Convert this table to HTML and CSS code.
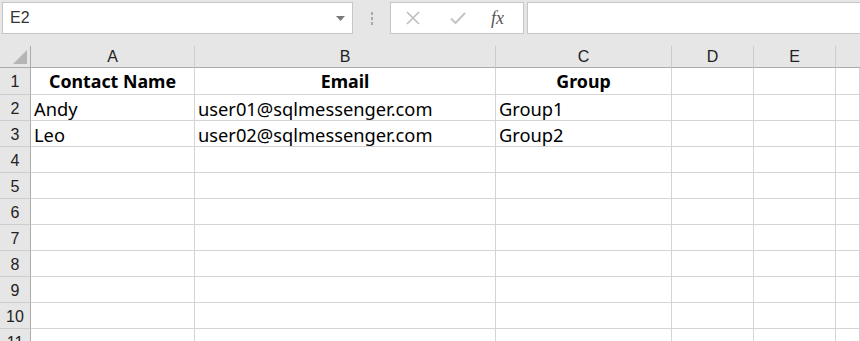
FILE: index.html
```html
<!DOCTYPE html>
<html lang="en">
<head>
    <meta charset="UTF-8">
    <meta name="viewport" content="width=device-width, initial-scale=1.0">
    <title>Contacts.xlsx</title>
    <link rel="stylesheet" href="styles.css">
</head>
<body>
    <div class="toolbar">
        <div class="namebox">
            <span>E2</span>
            <svg class="drop" width="9" height="5" viewBox="0 0 9 5"><path d="M0 0h9L4.5 5z" fill="#7a7a7a"/></svg>
        </div>
        <div class="grip">
            <i></i><i></i><i></i>
        </div>
        <div class="actions">
            <svg width="16" height="16" viewBox="0 0 16 16"><path d="M2 2l12 12M14 2L2 14" stroke="#bdbdbd" stroke-width="1.6" fill="none"/></svg>
            <svg width="18" height="16" viewBox="0 0 18 16"><path d="M2 8.5l4.5 4.5L16 3" stroke="#c4c4c4" stroke-width="2" fill="none"/></svg>
            <span class="fx">fx</span>
        </div>
        <div class="formula"></div>
    </div>

    <div class="sheet">
        <div class="corner"><b></b></div>
        <div class="colhead">A</div>
        <div class="colhead">B</div>
        <div class="colhead">C</div>
        <div class="colhead">D</div>
        <div class="colhead">E</div>
        <div class="colhead last"></div>

        <div class="rowhead first">1</div>
        <div class="cell head first">Contact Name</div>
        <div class="cell head first">Email</div>
        <div class="cell head first">Group</div>
        <div class="cell first"></div>
        <div class="cell first"></div>
        <div class="cell first"></div>

        <div class="rowhead">2</div>
        <div class="cell">Andy</div>
        <div class="cell">user01@sqlmessenger.com</div>
        <div class="cell">Group1</div>
        <div class="cell"></div>
        <div class="cell"></div>
        <div class="cell"></div>

        <div class="rowhead">3</div>
        <div class="cell">Leo</div>
        <div class="cell">user02@sqlmessenger.com</div>
        <div class="cell">Group2</div>
        <div class="cell"></div>
        <div class="cell"></div>
        <div class="cell"></div>

        <div class="rowhead">4</div>
        <div class="cell"></div><div class="cell"></div><div class="cell"></div><div class="cell"></div><div class="cell"></div><div class="cell"></div>
        <div class="rowhead">5</div>
        <div class="cell"></div><div class="cell"></div><div class="cell"></div><div class="cell"></div><div class="cell"></div><div class="cell"></div>
        <div class="rowhead">6</div>
        <div class="cell"></div><div class="cell"></div><div class="cell"></div><div class="cell"></div><div class="cell"></div><div class="cell"></div>
        <div class="rowhead">7</div>
        <div class="cell"></div><div class="cell"></div><div class="cell"></div><div class="cell"></div><div class="cell"></div><div class="cell"></div>
        <div class="rowhead">8</div>
        <div class="cell"></div><div class="cell"></div><div class="cell"></div><div class="cell"></div><div class="cell"></div><div class="cell"></div>
        <div class="rowhead">9</div>
        <div class="cell"></div><div class="cell"></div><div class="cell"></div><div class="cell"></div><div class="cell"></div><div class="cell"></div>
        <div class="rowhead">10</div>
        <div class="cell"></div><div class="cell"></div><div class="cell"></div><div class="cell"></div><div class="cell"></div><div class="cell"></div>
        <div class="rowhead">11</div>
        <div class="cell"></div><div class="cell"></div><div class="cell"></div><div class="cell"></div><div class="cell"></div><div class="cell"></div>
    </div>
</body>
</html>
```

FILE: styles.css
```css
body {
    margin: 0;
    padding: 0;
    background-color: #e6e6e6;
    font-family: "Noto Sans", Arial, sans-serif;
    overflow: hidden;
}

/* name box + formula bar */
.toolbar {
    display: flex;
    align-items: flex-start;
    height: 46px;
    padding: 2px 0 0 2px;
    box-sizing: border-box;
}
.namebox {
    width: 351px;
    height: 32px;
    box-sizing: border-box;
    background-color: #fff;
    border: 1px solid #c6c6c6;
    display: flex;
    align-items: center;
    justify-content: space-between;
    padding: 0 7px 0 7px;
    font-family: "Liberation Sans", Arial, sans-serif;
    font-size: 16px;
    color: #333;
}
.namebox .drop {
    margin-top: 1px;
}
.grip {
    width: 37px;
    height: 32px;
    display: flex;
    flex-direction: column;
    align-items: center;
    justify-content: center;
    gap: 2px;
}
.grip i {
    width: 2px;
    height: 3px;
    background-color: #a8a8a8;
}
.actions {
    width: 134px;
    height: 32px;
    box-sizing: border-box;
    background-color: #fff;
    border: 1px solid #c6c6c6;
    display: flex;
    align-items: center;
    padding-left: 14px;
    gap: 28px;
}
.actions .fx {
    font-family: "Liberation Serif", "Times New Roman", serif;
    font-style: italic;
    font-size: 18px;
    color: #555;
    margin-left: -4px;
}
.formula {
    flex: 1;
    height: 32px;
    margin-left: 3px;
    box-sizing: border-box;
    background-color: #fff;
    border: 1px solid #c6c6c6;
    border-right: none;
}

/* grid */
.sheet {
    display: grid;
    grid-template-columns: 31px 164px 301px 176px 82px 82px 1fr;
    grid-template-rows: 22px 27px repeat(10, 26px);
    background-color: #fff;
}
.corner,
.colhead {
    background-color: #e6e6e6;
    border-bottom: 1px solid #ababab;
    box-sizing: border-box;
}
.corner {
    border-right: 1px solid #ababab;
    position: relative;
}
.corner b {
    position: absolute;
    right: 3px;
    bottom: 3px;
    width: 0;
    height: 0;
    border-left: 14px solid transparent;
    border-bottom: 14px solid #b5b5b5;
}
.colhead {
    border-right: 1px solid #cdcdcd;
    display: flex;
    align-items: center;
    justify-content: center;
    font-family: "Liberation Sans", Arial, sans-serif;
    font-size: 16px;
    color: #222;
    padding-top: 1px;
}
.colhead.last {
    border-right: none;
}
.rowhead {
    background-color: #e6e6e6;
    border-right: 1px solid #ababab;
    border-bottom: 1px solid #cdcdcd;
    box-sizing: border-box;
    display: flex;
    align-items: center;
    justify-content: center;
    font-family: "Liberation Sans", Arial, sans-serif;
    font-size: 16px;
    color: #222;
    padding-top: 2px;
}
.cell {
    border-right: 1px solid #d4d4d4;
    border-bottom: 1px solid #d4d4d4;
    box-sizing: border-box;
    font-size: 18.3px;
    line-height: 25px;
    padding: 1px 0 0 3px;
    color: #000;
    white-space: nowrap;
    overflow: hidden;
}
.cell.first {
    line-height: 25px;
}
.cell.head {
    font-size: 17.8px;
    font-weight: bold;
    text-align: center;
    padding-left: 0;
}
```
